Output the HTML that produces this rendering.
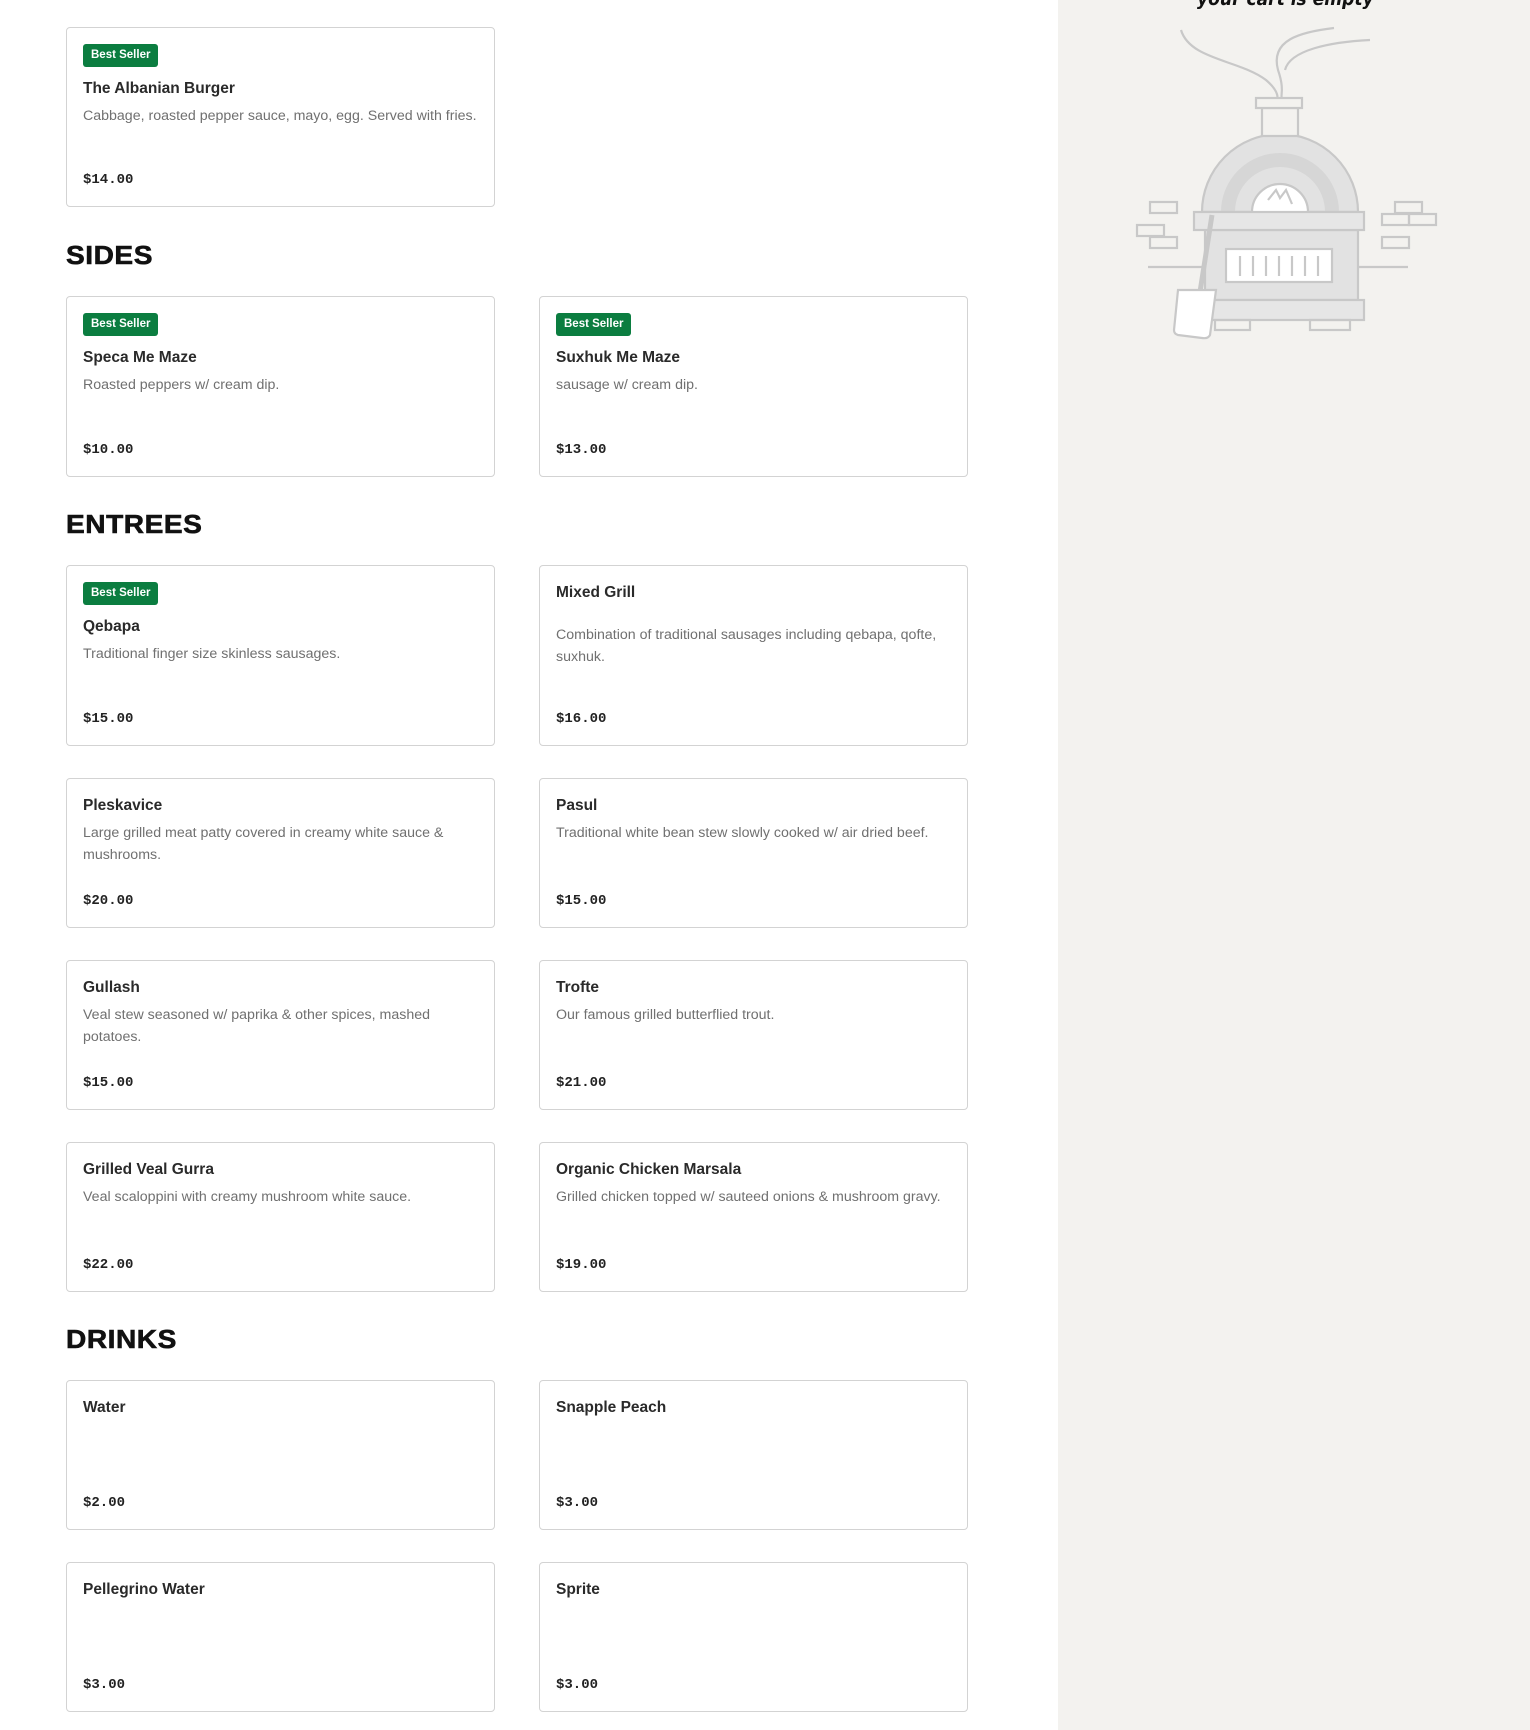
<!DOCTYPE html>
<html><head><meta charset="utf-8"><style>
*{box-sizing:border-box;margin:0;padding:0}
body{width:1530px;height:1730px;position:relative;background:#fff;font-family:"Liberation Sans",sans-serif;overflow:hidden;color:#222}
.side{position:absolute;left:1058px;top:0;width:472px;height:1730px;background:#f3f2ef}
.card{position:absolute;width:429px;border:1px solid #d3d3d3;border-radius:4px;background:#fff;padding:16px 16px;display:flex;flex-direction:column}
.badge{display:inline-block;align-self:flex-start;background:#0b7d40;color:#fff;font-size:11.5px;font-weight:bold;height:23px;line-height:23px;padding:0 8px;border-radius:3px;margin-bottom:11px}
.t{font-size:15.5px;line-height:22px;color:#2a2a2a;font-weight:bold}
.d{font-size:14.2px;line-height:22px;color:#707070;margin-top:5px}
.p{font-family:"Liberation Mono",monospace;font-weight:bold;font-size:14px;line-height:20px;margin-top:auto;color:#222}
h2{position:absolute;left:66px;font-size:26px;font-weight:900;letter-spacing:0.5px;color:#111;transform:scaleX(1.08);transform-origin:left;-webkit-text-stroke:0.6px #111}
</style></head><body>
<div class="side">
<div style="position:absolute;left:139px;top:-12px;font-family:'DejaVu Sans',sans-serif;font-style:italic;font-weight:bold;font-size:19px;color:#111;transform:scaleX(0.9);transform-origin:left">your cart is empty</div>
<svg width="472" height="360" style="position:absolute;left:0;top:0" fill="none" stroke="#c8c8c8" stroke-width="2.2">
<g transform="translate(-1058,0)">
<path d="M1181 30 C1190 60,1240 60,1266 80 C1280 92,1278 100,1276 98"/>
<path d="M1334 28 C1300 32,1270 40,1278 70 C1285 90,1280 96,1282 98"/>
<path d="M1370 40 C1330 42,1290 50,1285 70"/>
<path d="M1202 212 A78 78 0 0 1 1358 212 Z" fill="#e2e2e2"/>
<path d="M1228 212 A52 52 0 0 1 1332 212" stroke-width="14" stroke="#d6d6d6"/>
<path d="M1252 212 A28 28 0 0 1 1308 212" fill="#fff"/>
<path d="M1268 200 l8 -10 l4 8 l6 -8 l6 14"/>
<rect x="1262" y="108" width="36" height="28" fill="#f3f2ef"/>
<rect x="1256" y="98" width="46" height="10" fill="#f3f2ef"/>
<rect x="1205" y="230" width="153" height="70" fill="#e2e2e2"/>
<rect x="1194" y="212" width="170" height="18" fill="#e6e6e6"/>
<rect x="1226" y="249" width="106" height="33" fill="#fff"/>
<path d="M1240 256v20M1253 256v20M1266 256v20M1279 256v20M1292 256v20M1305 256v20M1318 256v20"/>
<rect x="1194" y="300" width="170" height="20" fill="#e6e6e6"/>
<rect x="1215" y="320" width="35" height="10"/><rect x="1310" y="320" width="40" height="10"/>
<rect x="1150" y="202" width="27" height="11"/><rect x="1137" y="225" width="27" height="11"/><rect x="1150" y="237" width="27" height="11"/>
<rect x="1395" y="202" width="27" height="11"/><rect x="1382" y="214" width="27" height="11"/><rect x="1409" y="214" width="27" height="11"/><rect x="1382" y="237" width="27" height="11"/>
<path d="M1148 267h56M1358 267h50"/>
<path d="M1212 215 L1200 292" stroke-width="5"/>
<path d="M1178 290 h38 l-6 45 q-2 4 -8 3 l-24 -3 q-4 -1 -4 -5 z" fill="#fff"/>
</g></svg>
</div>

<div class="card" style="left:66px;top:27px;height:180px"><span class="badge">Best Seller</span><div class="t">The Albanian Burger</div><div class="d">Cabbage, roasted pepper sauce, mayo, egg. Served with fries.</div><div class="p">$14.00</div></div>

<h2 style="top:240px">SIDES</h2>
<div class="card" style="left:66px;top:296px;height:181px"><span class="badge">Best Seller</span><div class="t">Speca Me Maze</div><div class="d">Roasted peppers w/ cream dip.</div><div class="p">$10.00</div></div>
<div class="card" style="left:539px;top:296px;height:181px"><span class="badge">Best Seller</span><div class="t">Suxhuk Me Maze</div><div class="d">sausage w/ cream dip.</div><div class="p">$13.00</div></div>

<h2 style="top:509px">ENTREES</h2>
<div class="card" style="left:66px;top:565px;height:181px"><span class="badge">Best Seller</span><div class="t">Qebapa</div><div class="d">Traditional finger size skinless sausages.</div><div class="p">$15.00</div></div>
<div class="card" style="left:539px;top:565px;height:181px"><div class="t">Mixed Grill</div><div class="d" style="margin-top:20px">Combination of traditional sausages including qebapa, qofte, suxhuk.</div><div class="p">$16.00</div></div>

<div class="card" style="left:66px;top:778px;height:150px"><div class="t">Pleskavice</div><div class="d">Large grilled meat patty covered in creamy white sauce &amp; mushrooms.</div><div class="p">$20.00</div></div>
<div class="card" style="left:539px;top:778px;height:150px"><div class="t">Pasul</div><div class="d">Traditional white bean stew slowly cooked w/ air dried beef.</div><div class="p">$15.00</div></div>

<div class="card" style="left:66px;top:960px;height:150px"><div class="t">Gullash</div><div class="d">Veal stew seasoned w/ paprika &amp; other spices, mashed<br>potatoes.</div><div class="p">$15.00</div></div>
<div class="card" style="left:539px;top:960px;height:150px"><div class="t">Trofte</div><div class="d">Our famous grilled butterflied trout.</div><div class="p">$21.00</div></div>

<div class="card" style="left:66px;top:1142px;height:150px"><div class="t">Grilled Veal Gurra</div><div class="d">Veal scaloppini with creamy mushroom white sauce.</div><div class="p">$22.00</div></div>
<div class="card" style="left:539px;top:1142px;height:150px"><div class="t">Organic Chicken Marsala</div><div class="d">Grilled chicken topped w/ sauteed onions &amp; mushroom gravy.</div><div class="p">$19.00</div></div>

<h2 style="top:1324px">DRINKS</h2>
<div class="card" style="left:66px;top:1380px;height:150px"><div class="t">Water</div><div class="p">$2.00</div></div>
<div class="card" style="left:539px;top:1380px;height:150px"><div class="t">Snapple Peach</div><div class="p">$3.00</div></div>
<div class="card" style="left:66px;top:1562px;height:150px"><div class="t">Pellegrino Water</div><div class="p">$3.00</div></div>
<div class="card" style="left:539px;top:1562px;height:150px"><div class="t">Sprite</div><div class="p">$3.00</div></div>
</body></html>
